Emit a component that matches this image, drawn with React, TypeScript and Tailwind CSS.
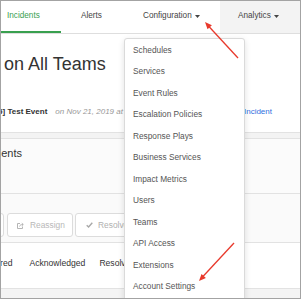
import React from 'react';

const font = { fontFamily: '"Liberation Sans", Arial, sans-serif' };

const menuItems = [
  'Schedules',
  'Services',
  'Event Rules',
  'Escalation Policies',
  'Response Plays',
  'Business Services',
  'Impact Metrics',
  'Users',
  'Teams',
  'API Access',
  'Extensions',
  'Account Settings',
];

const Caret: React.FC = () => (
  <svg width="5" height="3" viewBox="0 0 5 3" className="ml-[3px] mt-[1px]">
    <path d="M0 0h5L2.5 3z" fill="#444" />
  </svg>
);

const ShareIcon: React.FC = () => (
  <svg width="7" height="7" viewBox="0 0 7 7" fill="none" stroke="#b5b5b5" strokeWidth="1">
    <path d="M3 1.5H0.5v5h5V4.5" />
    <path d="M2.5 4.5C3 3 4 2.5 6 2.5M4.8 1.2L6.3 2.5L4.8 3.8" />
  </svg>
);

const CheckIcon: React.FC = () => (
  <svg width="7" height="6" viewBox="0 0 7 6" fill="none" stroke="#a8a8a8" strokeWidth="1.4">
    <path d="M0.7 3.2L2.6 5L6.3 0.8" />
  </svg>
);

export default function App() {
  return (
    <div
      className="relative w-[301px] h-[299px] overflow-hidden border border-[#a3a3a3] bg-white flex flex-col"
      style={font}
    >
      {/* top nav */}
      <nav className="h-[33px] shrink-0 flex border-b border-[#dedede] bg-white text-[8.2px] text-[#444]">
        <div className="ml-[-13px] w-[73px] pl-[19px] flex items-center border-b-2 border-[#39a04f] text-[#39a04f]">
          Incidents
        </div>
        <div className="w-[62px] pl-[20px] flex items-center border-b-2 border-transparent">Alerts</div>
        <div className="w-[97px] pl-[20px] flex items-center border-b-2 border-transparent">
          Configuration
          <Caret />
        </div>
        <div className="flex-1 pl-[18px] flex items-center bg-[#f3f3f3] border-b-2 border-transparent">
          Analytics
          <Caret />
        </div>
      </nav>

      {/* page header */}
      <section className="h-[99px] shrink-0 border-b border-[#e2e2e2] bg-white pt-[19px]">
        <h1 className="text-[18px] leading-[22px] text-[#333] ml-[3px] whitespace-nowrap">on All Teams</h1>
        <div className="mt-[32px] flex items-center h-[10px] text-[8px] leading-[10px] whitespace-nowrap">
          <span className="ml-[-10px] font-bold text-[#333]">[#5] Test Event</span>
          <span className="ml-[8px] italic text-[#999]">on Nov 21, 2019 at 9:14 AM</span>
          <span className="ml-auto mr-[28px] text-[#2f6fe0]">Incident</span>
        </div>
      </section>

      <div className="h-[5px] shrink-0 bg-[#f3f3f3]" />

      {/* incidents card title */}
      <div className="h-[56px] shrink-0 border-y border-[#e2e2e2] bg-[#fbfbfb] pt-[7px]">
        <div className="ml-[-23px] text-[11px] leading-[14px] text-[#333]">Incidents</div>
      </div>

      {/* toolbar */}
      <div className="h-[49px] shrink-0 border-b border-[#e2e2e2] bg-[#fafafa] pt-[19px] flex items-start">
        <div className="ml-[-41px] w-[44px] h-[24px] rounded-[3px] border border-[#dcdcdc] bg-white" />
        <div className="ml-[3px] w-[66px] h-[24px] rounded-[3px] border border-[#dcdcdc] bg-white flex items-center pl-[9px] gap-[6px] text-[8.4px] text-[#b8b8b8]">
          <ShareIcon />
          Reassign
        </div>
        <div className="ml-[2px] w-[66px] h-[24px] rounded-[3px] border border-[#dcdcdc] bg-white flex items-center pl-[10px] gap-[5px] text-[8.4px] text-[#b0b0b0]">
          <CheckIcon />
          Resolve
        </div>
      </div>

      {/* table header */}
      <div className="h-[46px] shrink-0 border-b border-[#e2e2e2] bg-white pt-[15px] flex text-[8.6px] leading-[10px] text-[#333] whitespace-nowrap">
        <span className="ml-[-25px]">Triggered</span>
        <span className="ml-[17px]">Acknowledged</span>
        <span className="ml-[14px]">Resolved</span>
      </div>

      <div className="flex-1 bg-[#f4f4f4]" />

      {/* configuration dropdown */}
      <div className="absolute left-[123px] top-[37px] w-[121px] h-[280px] rounded-[3px] border border-[#dadada] bg-white shadow-[0_2px_6px_rgba(0,0,0,0.12)]">
        {menuItems.map((item) => (
          <div key={item} className="h-[21.5px] flex items-center pl-[8px] text-[8.3px] text-[#555] whitespace-nowrap">
            {item}
          </div>
        ))}
      </div>

      {/* annotation arrows */}
      <svg
        className="absolute -left-px -top-px pointer-events-none"
        width="301"
        height="299"
        viewBox="0 0 301 299"
      >
        <line x1="238" y1="58" x2="208" y2="25.5" stroke="#e8392c" strokeWidth="1.3" />
        <polygon points="205,22 211.9,25.2 207.5,29.2" fill="#e8392c" />
        <line x1="234" y1="243" x2="202" y2="277.5" stroke="#e8392c" strokeWidth="1.3" />
        <polygon points="199,281 205.9,277.9 201.5,273.9" fill="#e8392c" />
      </svg>
    </div>
  );
}
